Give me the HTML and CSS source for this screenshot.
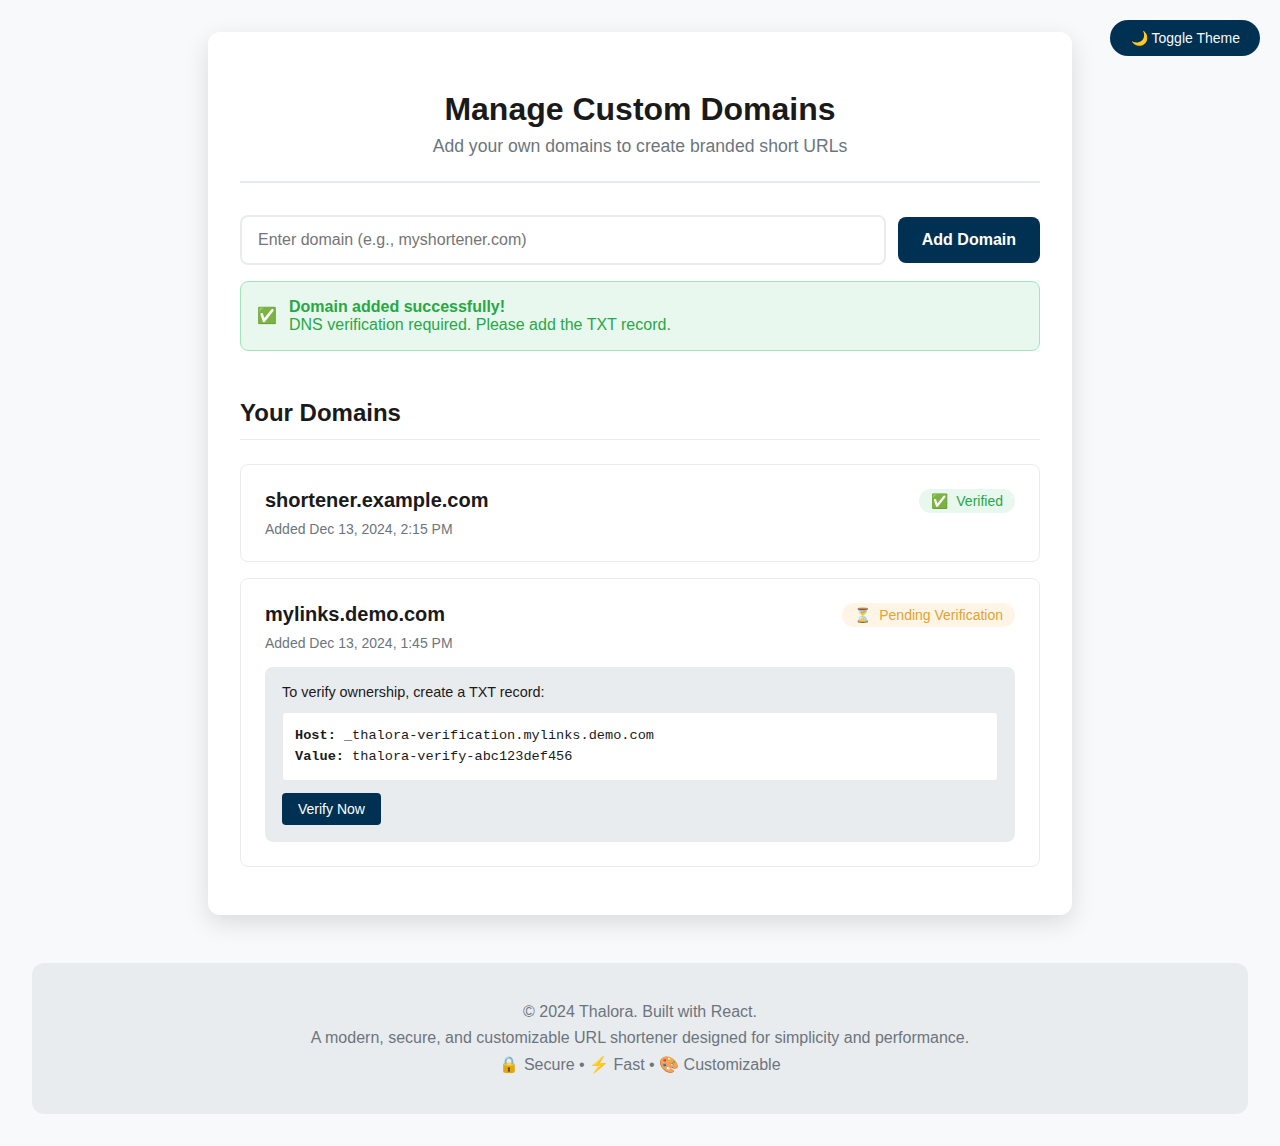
FILE: index.html
```html
<!DOCTYPE html>
<html lang="en">
<head>
	<meta charset="UTF-8">
	<title>Manage Custom Domains</title>
	<link rel="stylesheet" href="styles.css">
</head>
<body>
	<button class="theme-toggle">🌙 Toggle Theme</button>
	<main class="panel">
		<header class="panel-head">
			<h1>Manage Custom Domains</h1>
			<p>Add your own domains to create branded short URLs</p>
		</header>
		<form class="add-form">
			<input class="add-input" type="text" placeholder="Enter domain (e.g., myshortener.com)">
			<button class="add-btn" type="button">Add Domain</button>
		</form>
		<div class="alert">
			<span class="alert-icon">✅</span>
			<div>
				<strong>Domain added successfully!</strong><br>
				DNS verification required. Please add the TXT record.
			</div>
		</div>
		<h2 class="section-title">Your Domains</h2>
		<div class="domain">
			<div class="domain-top">
				<div>
					<h3>shortener.example.com</h3>
					<p class="added">Added Dec 13, 2024, 2:15 PM</p>
				</div>
				<span class="badge badge-ok"><span>✅</span>Verified</span>
			</div>
		</div>
		<div class="domain">
			<div class="domain-top">
				<div>
					<h3>mylinks.demo.com</h3>
					<p class="added">Added Dec 13, 2024, 1:45 PM</p>
				</div>
				<span class="badge badge-wait"><span>⏳</span>Pending Verification</span>
			</div>
			<div class="verify">
				<p>To verify ownership, create a TXT record:</p>
				<div class="record">
					<div><b>Host:</b> _thalora-verification.mylinks.demo.com</div>
					<div><b>Value:</b> thalora-verify-abc123def456</div>
				</div>
				<button class="verify-btn" type="button">Verify Now</button>
			</div>
		</div>
	</main>
	<footer class="foot">
		<p>© 2024 Thalora. Built with React.</p>
		<p>A modern, secure, and customizable URL shortener designed for simplicity and performance.</p>
		<p class="foot-tags">🔒 Secure • ⚡ Fast • 🎨 Customizable</p>
	</footer>
</body>
</html>
```

FILE: styles.css
```css
*{box-sizing: border-box;}
body{margin: 0;padding: 32px 32px 32px;background: #f8f9fa;color: #1a1a1a;font-family: "Liberation Sans", Arial, sans-serif;font-size: 16px;}
h1,h2,h3,p{margin: 0;}

.theme-toggle{position: absolute;top: 20px;right: 20px;height: 36px;padding: 0 20px 0 21px;border: 0;border-radius: 18px;background: #003153;color: #f8f9fa;font-family: inherit;font-size: 14px;}

.panel{width: 864px;margin: 0 auto 48px;padding: 48px 32px;background: #fff;border-radius: 12px;box-shadow: 0 8px 24px rgba(0,0,0,0.12);}
.panel-head{text-align: center;padding-bottom: 25px;border-bottom: 2px solid #e9ecef;margin-bottom: 32px;}
.panel-head h1{font-size: 32px;line-height: 58px;}
.panel-head p{font-size: 17.6px;line-height: 20px;color: #6c757d;margin-top: -2px;}

.add-form{display: flex;align-items: center;gap: 12px;margin-bottom: 16px;}
.add-input{flex: 1;height: 50px;padding: 0 16px;border: 2px solid #e9ecef;border-radius: 8px;background: #fff;font-family: inherit;font-size: 16px;}
.add-input::placeholder{color: #757575;}
.add-btn{height: 46px;padding: 0 24px;border: 0;border-radius: 8px;background: #003153;color: #fff;font-family: inherit;font-size: 16px;font-weight: bold;}

.alert{display: flex;align-items: center;gap: 12px;height: 70px;padding: 0 16px;margin-bottom: 48px;background: #e8f8ef;border: 1px solid #a3e4bc;border-radius: 8px;color: #28a745;line-height: 18px;}
.alert-icon{font-size: 16px;}

.section-title{font-size: 24px;line-height: 28px;padding-bottom: 12px;border-bottom: 1px solid #e9ecef;margin-bottom: 24px;}

.domain{padding: 24px;margin-bottom: 16px;background: #fff;border: 1px solid #e9ecef;border-radius: 8px;}
.domain:last-child{margin-bottom: 0;}
.domain-top{display: flex;justify-content: space-between;align-items: flex-start;}
.domain h3{font-size: 20px;line-height: 23px;}
.added{font-size: 14px;line-height: 16px;color: #6c757d;margin-top: 9px;}

.badge{display: flex;gap: 8px;align-items: center;height: 24px;padding: 0 12px;border-radius: 12px;font-size: 14px;}
.badge-ok{background: #e8f8ef;color: #28a745;}
.badge-wait{background: #fef5e7;color: #e3a232;}

.verify{margin-top: 16px;padding: 17px;background: #e9ecef;border-radius: 8px;}
.verify p{font-size: 14.4px;line-height: 16px;}
.record{margin-top: 12px;padding: 12px 12px 13px;background: #fff;border: 1px solid #e9ecef;border-radius: 4px;font-family: "Liberation Mono", monospace;font-size: 13.6px;line-height: 21px;}
.verify-btn{display: block;margin-top: 12px;height: 32px;padding: 0 16px;border: 0;border-radius: 4px;background: #003153;color: #fff;font-family: inherit;font-size: 14px;}

.foot{padding: 36px 32px;background: #e9ecef;border-radius: 12px;text-align: center;color: #6c757d;line-height: 26px;}
.foot-tags{margin-top: 1px;}
```
